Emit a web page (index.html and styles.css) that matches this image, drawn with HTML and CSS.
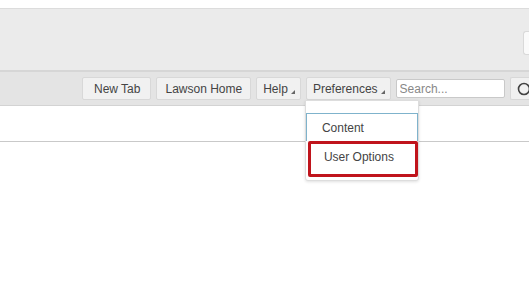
FILE: index.html
```html
<!DOCTYPE html>
<html lang="en">
<head>
    <meta charset="UTF-8">
    <title>Lawson Portal</title>
    <link rel="stylesheet" href="styles.css">
</head>
<body>
    <div class="topstrip"></div>
    <div class="header">
        <div class="header-box"></div>
    </div>
    <div class="toolbar">
        <button class="tbtn">New Tab</button>
        <button class="tbtn home">Lawson Home</button>
        <button class="tbtn drop">Help<span class="caret"></span></button>
        <div class="menu-wrap">
            <button class="tbtn drop">Preferences<span class="caret"></span></button>
            <div class="dropdown">
                <div class="item active">Content</div>
                <div class="item marked">User Options</div>
            </div>
        </div>
        <input class="search" type="text" placeholder="Search...">
        <button class="tbtn search-btn">
            <svg width="14" height="14" viewBox="0 0 14 14"><circle cx="7" cy="7" r="5.5" fill="none" stroke="#444" stroke-width="1.6"/></svg>
        </button>
    </div>
    <div class="content">
        <div class="tabline"></div>
    </div>
</body>
</html>
```

FILE: styles.css
```css
body {
    margin: 0;
    font-family: "Liberation Sans", Arial, sans-serif;
    font-size: 12px;
    color: #444;
    background: #fff;
    overflow: hidden;
    width: 529px;
    height: 299px;
}

.topstrip {
    height: 8px;
    background: #fff;
    border-bottom: 1px solid #dcdcdc;
}

.header {
    height: 61px;
    background: #ebebeb;
    border-bottom: 2px solid #d6d6d6;
    display: flex;
    justify-content: flex-end;
    align-items: center;
}

.header-box {
    width: 5px;
    height: 22px;
    margin-top: 6px;
    background: #fafafa;
    border: 1px solid #d9d9d9;
    border-right: none;
    border-radius: 3px 0 0 3px;
}

.toolbar {
    height: 33px;
    background: #e4e4e4;
    border-bottom: 1px solid #d3d3d3;
    display: flex;
    align-items: center;
    gap: 5px;
    padding-left: 82px;
    white-space: nowrap;
}

.tbtn {
    font-family: inherit;
    font-size: 12px;
    color: #444;
    background: #f1f1f1;
    border: 1px solid #d8d8d8;
    border-radius: 2px;
    height: 23px;
    padding: 0 10px 0 11px;
    margin: 0;
    flex-shrink: 0;
    display: flex;
    align-items: center;
}

.tbtn.home {
    padding: 0 8px;
}

.tbtn.drop {
    padding: 0 5px 0 6px;
}

.caret {
    width: 0;
    height: 0;
    margin-left: 3px;
    margin-top: 6px;
    border-left: 4px solid transparent;
    border-bottom: 4px solid #666;
}

.menu-wrap {
    position: relative;
}

.search {
    font-family: inherit;
    font-size: 12px;
    width: 101px;
    height: 17px;
    padding: 0 3px;
    margin: 0;
    border: 1px solid #c9c9c9;
    border-radius: 2px;
    background: #fff;
    color: #444;
    flex-shrink: 0;
}

.search::placeholder {
    color: #888;
}

.search-btn {
    width: 22px;
    padding: 0 0 0 6px;
    border-right: none;
    border-radius: 2px 0 0 2px;
    overflow: hidden;
}

.search-btn svg {
    flex-shrink: 0;
}

.dropdown {
    position: absolute;
    top: 23px;
    left: -1px;
    width: 114px;
    height: 81px;
    background: #fff;
    border: 1px solid #ddd;
    border-radius: 0 0 3px 3px;
    box-shadow: 0 1px 3px rgba(0, 0, 0, 0.12);
    padding-top: 12px;
    box-sizing: border-box;
    z-index: 5;
}

.item {
    height: 28px;
    line-height: 28px;
    padding-left: 16px;
    box-sizing: border-box;
    color: #444;
}

.active {
    border: 1px solid #7fb3cc;
    border-bottom: none;
    padding-left: 15px;
}

.marked {
    height: 36px;
    line-height: 26px;
    margin-left: 2px;
    padding-left: 13px;
    border: 3px solid #c0141c;
    border-radius: 2px;
}

.content {
    height: 150px;
    padding-top: 35px;
}

.tabline {
    height: 1px;
    background: #c9c9c9;
}
```
